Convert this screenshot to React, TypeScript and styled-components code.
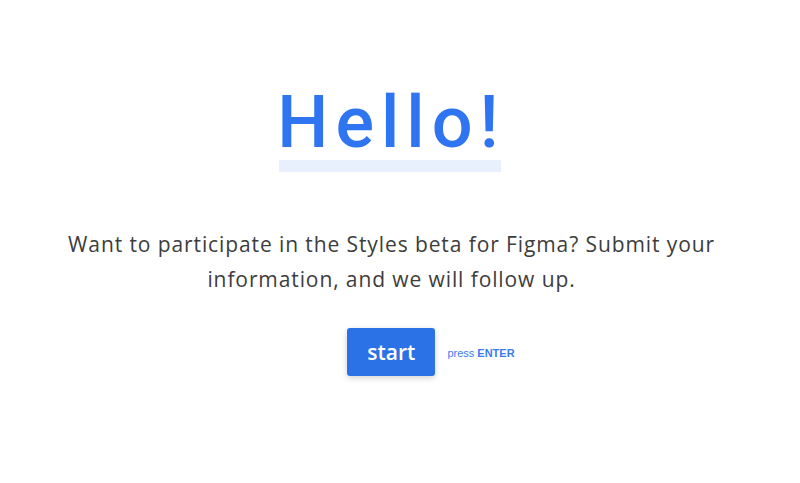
import React from "react";
import styled, { createGlobalStyle } from "styled-components";

const GlobalStyle = createGlobalStyle`
  html, body { margin: 0; padding: 0; background: #ffffff; }
  body { font-family: "Open Sans", "Liberation Sans", sans-serif; }
`;

const Page = styled.main`
  width: 800px;
  height: 483px;
  box-sizing: border-box;
  padding: 79px 17px 0 0;
  display: flex;
  flex-direction: column;
  align-items: center;
`;

const Title = styled.h1`
  margin: 0;
  display: inline-block;
  font-family: Roboto, "Liberation Sans", sans-serif;
  font-weight: 500;
  font-size: 72px;
  line-height: 88px;
  letter-spacing: 7px;
  color: #2f74f0;
  &::after {
    content: "";
    display: block;
    height: 12px;
    margin: -7px 5px 0 2px;
    background: #e8effd;
  }
`;

const Lead = styled.p`
  margin: 55px 0 0;
  text-align: center;
  font-size: 21px;
  line-height: 35px;
  letter-spacing: 0.9px;
  color: #3d3d3d;
  max-width: 700px;
`;

const Actions = styled.div`
  margin: 31px 0 0 79px;
  display: flex;
  align-items: center;
  gap: 12px;
`;

const StartButton = styled.button`
  width: 88px;
  height: 48px;
  border: none;
  border-radius: 3px;
  background: #2a72e6;
  color: #ffffff;
  font-family: "Open Sans", "Liberation Sans", sans-serif;
  font-size: 21px;
  font-weight: 600;
  box-shadow: 0 2px 6px rgba(0, 0, 0, 0.18);
  cursor: pointer;
`;

const Hint = styled.span`
  font-family: "Liberation Sans", Arial, sans-serif;
  font-size: 11px;
  color: #3b7cef;
  margin-top: 2px;
  b { font-weight: 700; }
`;

export default function App() {
  return (
    <>
      <GlobalStyle />
      <Page>
        <Title>Hello!</Title>
        <Lead>
          Want to participate in the Styles beta for Figma? Submit your
          information, and we will follow up.
        </Lead>
        <Actions>
          <StartButton>start</StartButton>
          <Hint>
            press <b>ENTER</b>
          </Hint>
        </Actions>
      </Page>
    </>
  );
}
